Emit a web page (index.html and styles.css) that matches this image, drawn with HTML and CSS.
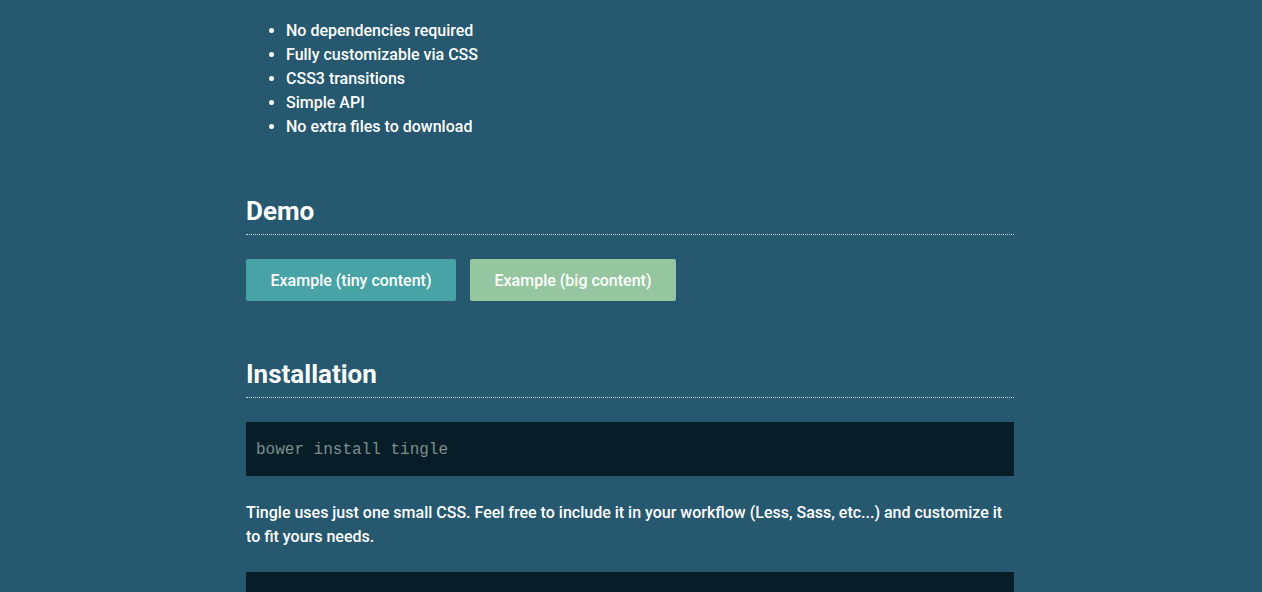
FILE: index.html
```html
<!DOCTYPE html>
<html lang="en">
<head>
<meta charset="utf-8">
<title>Tingle</title>
<link rel="stylesheet" href="styles.css">
</head>
<body>
<main class="container">
  <ul class="features">
    <li>No dependencies required</li>
    <li>Fully customizable via CSS</li>
    <li>CSS3 transitions</li>
    <li>Simple API</li>
    <li>No extra files to download</li>
  </ul>

  <h2 class="section-title">Demo</h2>
  <div class="buttons">
    <button class="btn btn-primary">Example (tiny content)</button>
    <button class="btn btn-secondary">Example (big content)</button>
  </div>

  <h2 class="section-title">Installation</h2>
  <pre class="code">bower install tingle</pre>
  <p class="text">Tingle uses just one small CSS. Feel free to include it in your workflow (Less, Sass, etc...) and customize it to fit yours needs.</p>
  <pre class="code code-tall"></pre>
</main>
</body>
</html>
```

FILE: styles.css
```css
html, body {
  margin: 0;
  padding: 0;
  background: #26586f;
  height: 100%;
  overflow: hidden;
}
body {
  font-family: Roboto, "Liberation Sans", sans-serif;
  font-weight: 500;
  font-size: 16px;
  line-height: 24px;
  color: #ffffff;
}
.container {
  width: 768px;
  padding: 18px 2px 0 0;
  margin: 0 auto;
}
.features {
  margin: 0;
  padding-left: 40px;
}
.features li {
  padding-top: 1px;
  margin-bottom: -1px;
}
.section-title {
  font-size: 26px;
  font-weight: 700;
  line-height: 31px;
  margin: 58px 0 0;
  padding-bottom: 7px;
  border-bottom: 1px dotted #c8d3d8;
}
.buttons {
  display: flex;
  gap: 14px;
  margin-top: 24px;
}
.btn {
  font-family: inherit;
  font-weight: 500;
  font-size: 16px;
  line-height: 24px;
  color: #ffffff;
  border: none;
  border-radius: 2px;
  height: 42px;
  padding: 1px 24.5px 0;
  cursor: pointer;
}
.btn-primary {
  background: #47a3a6;
}
.btn-secondary {
  background: #95c6a0;
}
.code {
  margin: 24px 0 0;
  background: #071e29;
  color: #7c8f8c;
  font-family: "Liberation Mono", monospace;
  font-size: 16px;
  line-height: 24px;
  padding: 16px 10px 14px;
}
.code-tall {
  height: 120px;
  margin-top: 23px;
}
.text {
  margin: 24px 0 0;
  padding-top: 1px;
}
```
